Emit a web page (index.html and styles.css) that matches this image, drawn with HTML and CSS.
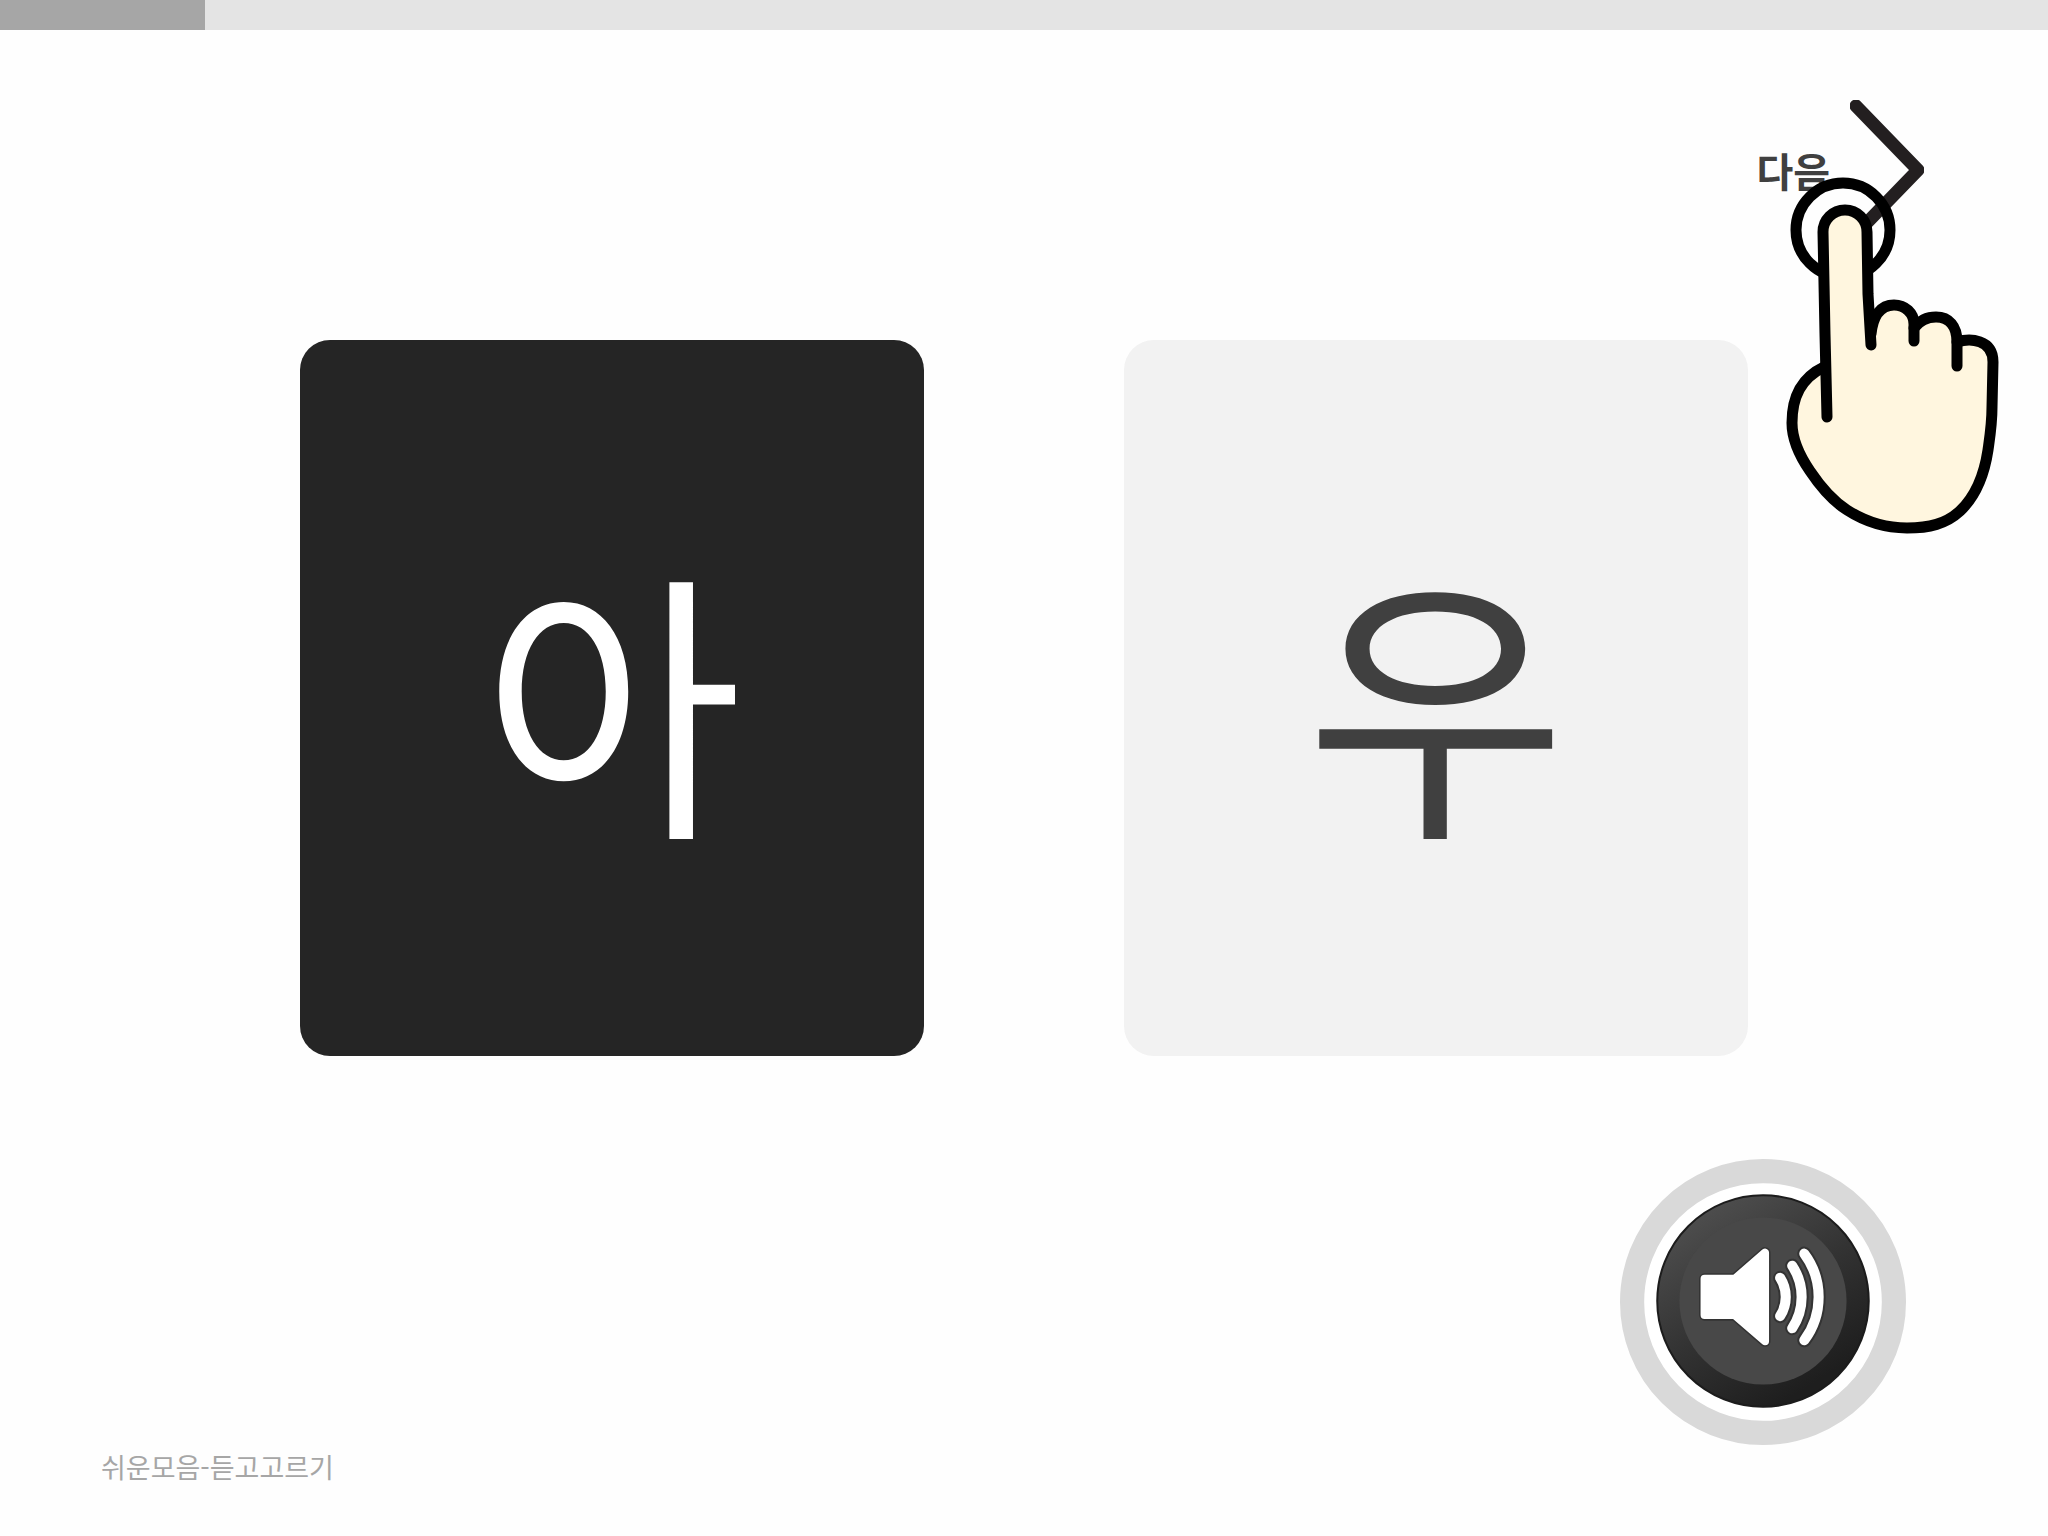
FILE: index.html
```html
<!DOCTYPE html>
<html lang="ko">
<head>
<meta charset="utf-8">
<meta name="viewport" content="width=device-width, initial-scale=1">
<title>쉬운모음-듣고고르기</title>
<link rel="stylesheet" href="styles.css">
</head>
<body>
<progress class="progress" value="10" max="100" aria-label="진행률"></progress>
<header class="topbar">
  <div class="next-wrap">
    <button class="next" type="button">
      <span>다음</span>
      <svg class="chevron" viewBox="0 0 74 140" aria-hidden="true">
        <path d="M6 6 68 70 6 134"/>
      </svg>
    </button>
    <svg class="hand" viewBox="0 0 216 360" aria-hidden="true">
      <circle class="line" cx="59" cy="56" r="47"/>
      <path class="skin" d="M39 58A22 22 0 0 1 83 58L86 156 91 144C93 136 101 131 110 131C121 131 130 139 130 150C133 146 143 143 152 143C165 143 173 152 173 168C185 165 209 162 209 184L208 233C208 250 206 262 204 276C201 296 194 320 176 337C162 350 145 354 123 354C98 354 80 347 63 336C49 327 36 312 26 297C15 281 8 266 8 249C8 223 17 204 40 193Z"/>
      <path class="line" d="M43 243 41 160 39 58A22 22 0 0 1 83 58L84 120 87 171"/>
      <path class="line" d="M87 160C89 141 97 131 110 131C121 131 130 139 130 150V167"/>
      <path class="line" d="M130 154C136 146 143 143 152 143C165 143 173 152 173 168V192"/>
      <path class="line" d="M173 168C186 164 209 165 209 188L208 233C208 250 206 262 204 276C201 296 194 320 176 337C162 350 145 354 123 354C98 354 80 347 63 336C49 327 36 312 26 297C15 281 8 266 8 249C8 223 17 204 40 193"/>
    </svg>
  </div>
</header>
<main class="choices">
  <button class="card card-selected" type="button" aria-pressed="true">아</button>
  <button class="card" type="button" aria-pressed="false">우</button>
</main>
<footer class="bottom">
  <p class="lesson">쉬운모음-듣고고르기</p>
  <button class="listen" type="button" aria-label="듣기">
    <svg class="speaker" viewBox="0 0 284 284" aria-hidden="true">
      <defs>
        <linearGradient id="bezel" x1="0.3" y1="0.05" x2="0.8" y2="0.85">
          <stop offset="0" stop-color="#4c4c4c"/>
          <stop offset="0.5" stop-color="#333"/>
          <stop offset="1" stop-color="#1e1e1e"/>
        </linearGradient>
      </defs>
      <circle cx="142" cy="142" r="130" fill="#fff" stroke="#d9d9d9" stroke-width="24"/>
      <circle cx="142" cy="141" r="105" fill="url(#bezel)" stroke="#1c1c1c" stroke-width="2"/>
      <circle cx="142" cy="141" r="83" fill="#484848"/>
      <g fill="none" stroke="#333" stroke-width="14" stroke-linecap="round">
        <path d="M159 118A35 35 0 0 1 159 156"/>
        <path d="M171 106A56 56 0 0 1 171 168"/>
        <path d="M183 94A72 72 0 0 1 183 180"/>
      </g>
      <path d="M84 119H114L144 93V181L114 155H84Z" fill="#fff" stroke="#333" stroke-width="11" stroke-linejoin="round"/>
      <path d="M84 119H114L144 93V181L114 155H84Z" fill="#fff" stroke="#fff" stroke-width="8" stroke-linejoin="round"/>
      <g fill="none" stroke="#fff" stroke-width="10" stroke-linecap="round">
        <path d="M159 118A35 35 0 0 1 159 156"/>
        <path d="M171 106A56 56 0 0 1 171 168"/>
        <path d="M183 94A72 72 0 0 1 183 180"/>
      </g>
    </svg>
  </button>
</footer>
</body>
</html>
```
FILE: styles.css
```css
* {
  box-sizing: border-box;
}

body {
  margin: 0;
  min-height: 100vh;
  display: flex;
  flex-direction: column;
  overflow-x: hidden;
  background: #fefefe;
  color: #404040;
  font-family: "Noto Sans CJK KR", sans-serif;
}

button {
  margin: 0;
  padding: 0;
  border: 0;
  background: none;
  color: inherit;
  font: inherit;
  cursor: pointer;
}

.progress {
  appearance: none;
  display: block;
  width: 100%;
  height: 30px;
  border: 0;
  background: #e4e4e4;
}

.progress::-webkit-progress-bar {
  background: #e4e4e4;
}

.progress::-webkit-progress-value {
  background: #a6a6a6;
}

.progress::-moz-progress-bar {
  background: #a6a6a6;
}

.topbar {
  display: flex;
  justify-content: flex-end;
  padding: 70px 124px 100px;
}

.next-wrap {
  position: relative;
}

.next {
  display: flex;
  align-items: center;
  gap: 20px;
  font-size: 40px;
  font-weight: 700;
  line-height: 60px;
}

.chevron {
  display: block;
  width: 74px;
  height: 140px;
  fill: none;
  stroke: #231f20;
  stroke-width: 13px;
  stroke-linecap: round;
  stroke-linejoin: round;
}

/* Tutorial pointer lying over the next button */
.hand {
  position: absolute;
  top: 74px;
  right: -76px;
  width: 216px;
  height: 360px;
  pointer-events: none;
}

.hand .skin {
  fill: #fff6df;
}

.hand .line {
  fill: none;
  stroke: #000;
  stroke-width: 11px;
  stroke-linecap: round;
  stroke-linejoin: round;
}

.choices {
  display: grid;
  grid-template-columns: 1fr 1fr;
  gap: 200px;
  padding: 0 300px;
}

.card {
  display: flex;
  align-items: center;
  justify-content: center;
  aspect-ratio: 156 / 179;
  padding-bottom: 8px;
  border-radius: 30px;
  background: #f2f2f2;
  font-size: 284px;
  font-weight: 400;
  line-height: 400px;
}

.card-selected {
  background: #252525;
  color: #fff;
}

.bottom {
  flex: 1;
  display: flex;
  align-items: flex-end;
  justify-content: space-between;
  padding: 103px 142px 49px 101px;
}

.lesson {
  margin: 0;
  color: #a6a6a6;
  font-size: 27px;
  font-weight: 400;
  line-height: 40px;
}

.listen {
  align-self: flex-start;
  border-radius: 50%;
}

.speaker {
  display: block;
  width: 286px;
  height: 286px;
}
```
